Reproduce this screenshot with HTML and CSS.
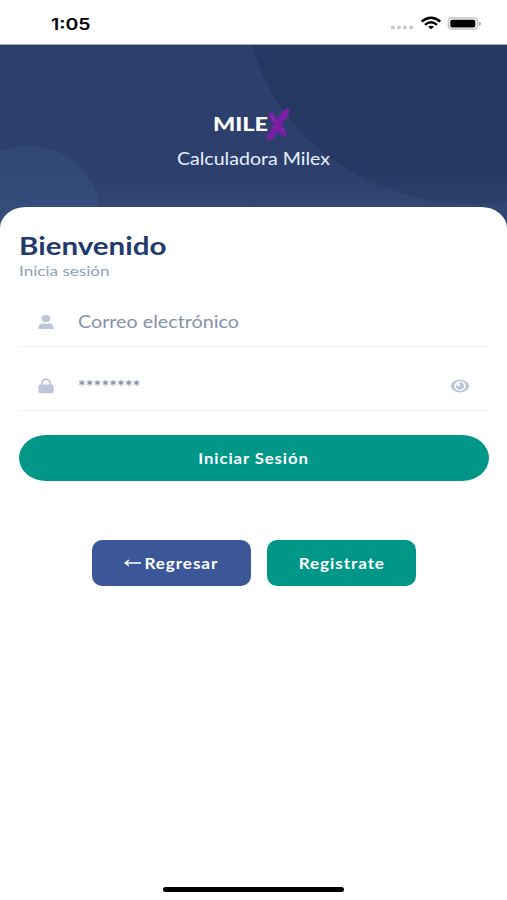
FILE: index.html
```html
<!DOCTYPE html>
<html lang="es">
<head>
<meta charset="utf-8">
<title>Calculadora Milex</title>
<link rel="stylesheet" href="styles.css">
</head>
<body>
<div class="status">
  <span class="wide time">1:05</span>
  <svg class="indicators" width="92" height="16" viewBox="0 0 92 16">
    <g fill="#c9c9cb"><circle cx="3.800" cy="12.400" r="2"/><circle cx="10" cy="12.400" r="2"/><circle cx="16" cy="12.400" r="2"/><circle cx="22.200" cy="12.400" r="2"/></g>
    <g fill="none" stroke="#000" stroke-width="2.300"><path d="M32.700 6.500Q42 -1.100 51.300 6.500"/><path d="M36 9.800Q42 4.600 48 9.800"/></g>
    <path d="M39 11.800Q42 9.600 45 11.800L42 14.200Z"/>
    <rect x="59.500" y="3" width="29" height="11" rx="3.500" fill="#fff" stroke="#c4c4c6" stroke-width="1.700"/>
    <rect x="61.300" y="4.700" width="25" height="7.800" rx="1.800"/>
    <path d="M90 6.700v4q2-.7 2-2t-2-2z" fill="#a8a8aa"/>
  </svg>
</div>
<header class="hero">
  <svg class="shapes" width="507" height="185" viewBox="0 45 507 185">
    <defs>
      <linearGradient id="glow" x1="0" y1="0" x2="0" y2="1"><stop offset=".66" stop-color="#3d5a85" stop-opacity="0"/><stop offset=".88" stop-color="#3d5a85" stop-opacity=".28"/></linearGradient>
    </defs>
    <ellipse cx="474" cy="0" rx="227" ry="204" fill="#253861"/>
    <ellipse cx="28" cy="210" rx="71" ry="64" fill="#314876"/>
    <rect x="0" y="45" width="507" height="185" fill="url(#glow)"/>
  </svg>
  <div class="brand">
    <span class="wide logo">MILE</span>
    <svg class="logo-x" width="24" height="32" viewBox="0 0 24 32">
      <path d="M3 6L5 4.500L7 5L10 10L12 11L16 3.500L19.500 2.200L21.500 .3L23.500 3L22.500 7.500L18.500 12L15.500 16L17.500 20L20.500 25L19 28L16 27.500L12.500 23L10 26L6.500 31L2 31.500L0 29L3 25.500L6 20L8 16L6 13L3.500 11Z" fill="#781fa4" stroke="#781fa4" stroke-width=".8"/>
      <path d="M5.500 8L9 13M16 20L18 23.500" stroke="#9352b8" stroke-width=".7" fill="none"/>
    </svg>
  </div>
  <span class="wide tagline">Calculadora Milex</span>
</header>
<main class="card">
  <h1><span class="wide">Bienvenido</span></h1>
  <p class="sub"><span class="wide">Inicia sesión</span></p>
  <div class="field">
    <svg class="icon" width="16" height="16" viewBox="0 0 16 16"><ellipse cx="8" cy="4.600" rx="4.400" ry="3.700"/><path d="M.4 15v-1.300Q.8 9.600 5 9.200Q8 10.600 11 9.200Q15.200 9.600 15.600 13.700V15Z"/></svg>
    <span class="wide value">Correo electrónico</span>
  </div>
  <div class="field password">
    <svg class="icon" width="16" height="16" viewBox="0 0 16 16"><path d="M3.800 8V5.500C3.800 0 12.200 0 12.200 5.500V8" fill="none" stroke="#bdc5d8" stroke-width="1.700"/><rect x=".4" y="6.500" width="15.200" height="8.800" rx="1.800"/></svg>
    <span class="wide value mask">********</span>
    <svg class="icon eye" width="20" height="14" viewBox="0 0 20 14"><path d="M.3 7Q3.600.5 10 .5T19.700 7Q16.400 13.500 10 13.500T.3 7Z"/><ellipse cx="10" cy="7" rx="5.600" ry="5.100" fill="#fff"/><ellipse cx="10" cy="7" rx="4" ry="3.700"/><circle cx="8.300" cy="5.600" r="1.700" fill="#fff"/></svg>
  </div>
  <button class="login"><span class="wide">Iniciar Sesión</span></button>
  <div class="actions">
    <button class="back"><svg width="17" height="8" viewBox="0 0 17 8"><path d="M17 4H2M5 1L1.200 4L5 7" fill="none" stroke="#fff" stroke-width="1.400"/></svg><span class="wide">Regresar</span></button>
    <button class="register"><span class="wide">Registrate</span></button>
  </div>
</main>
<div class="home"></div>
</body>
</html>
```
FILE: styles.css
```css
* { box-sizing: border-box; }
body {
  margin: 0;
  height: 900px;
  display: flex;
  flex-direction: column;
  overflow: hidden;
  background: #fff;
  font-family: Lato, sans-serif;
}
/* Horizontal stretch shared by every label */
.wide {
  display: inline-block;
  white-space: nowrap;
  transform: scaleX(var(--stretch, 1.16));
  transform-origin: left center;
}
.status {
  height: 45px;
  flex: none;
  display: flex;
  justify-content: space-between;
  padding: 14px 26px 0 51px;
  border-bottom: 1px solid #a9a9c3;
}
.time {
  --stretch: 1.22;
  font: 600 16px/20px Inter, sans-serif;
}
.indicators { margin-top: 1px; }
.hero {
  position: relative;
  height: 162px;
  flex: none;
  display: flex;
  flex-direction: column;
  align-items: center;
  padding-top: 63px;
  background: #2d3f6c;
}
.shapes {
  position: absolute;
  top: 0;
  left: 0;
  background: #2d3f6c;
}
.brand {
  position: relative;
  display: flex;
  width: 76px;
  height: 34px;
  margin-right: 5px;
}
.logo {
  --stretch: 1.3;
  width: 53px;
  flex: none;
  font-size: 18px;
  font-weight: 900;
  line-height: 33px;
  color: #fff;
}
.logo-x { flex: none; }
.tagline {
  --stretch: 1.152;
  position: relative;
  transform-origin: center;
  margin-top: 6px;
  font-size: 17px;
  line-height: 22px;
  color: #e6efff;
}
.card {
  position: relative;
  flex: 1;
  padding: 22px 18px 0 19px;
  border-radius: 26px 26px 0 0 / 21px 21px 0 0;
  background: #fff;
}
h1 {
  --stretch: 1.18;
  margin: 0;
  font-size: 25px;
  line-height: 32px;
  color: #233a6c;
}
.sub {
  --stretch: 1.22;
  margin: 0;
  padding-top: 1px;
  font-size: 14px;
  line-height: 18px;
  color: #929db8;
}
.field {
  height: 64px;
  display: flex;
  align-items: center;
  padding: 0 19px;
  border-bottom: 1px solid #eff1f4;
}
.sub + .field { height: 67px; padding-top: 17px; }
.icon { fill: #bdc5d8; flex: none; }
.value {
  margin-left: 24px;
  font-size: 17px;
  color: #8590ad;
}
.mask { --stretch: 1.08; font-weight: 700; }
.password { padding-top: 15px; }
.eye { margin-left: auto; }
button {
  --stretch: 1.14;
  display: flex;
  align-items: center;
  justify-content: center;
  height: 46px;
  padding: 0;
  border: 0;
  border-radius: 10px;
  background: #009788;
  color: #fff;
  font: 700 15px/20px Lato, sans-serif;
  letter-spacing: .8px;
}
button .wide { transform-origin: center; }
.login {
  --stretch: 1.115;
  width: 100%;
  margin-top: 24px;
  border-radius: 27px / 23px;
}
.actions {
  display: flex;
  justify-content: center;
  gap: 16px;
  margin-top: 59px;
}
.back {
  width: 159px;
  gap: 8px;
  padding-right: 5px;
  background: #3c5798;
}
.register { width: 149px; }
.home {
  width: 181px;
  height: 5px;
  margin: 0 auto 8px;
  flex: none;
  border-radius: 3px;
  background: #000;
}
```
